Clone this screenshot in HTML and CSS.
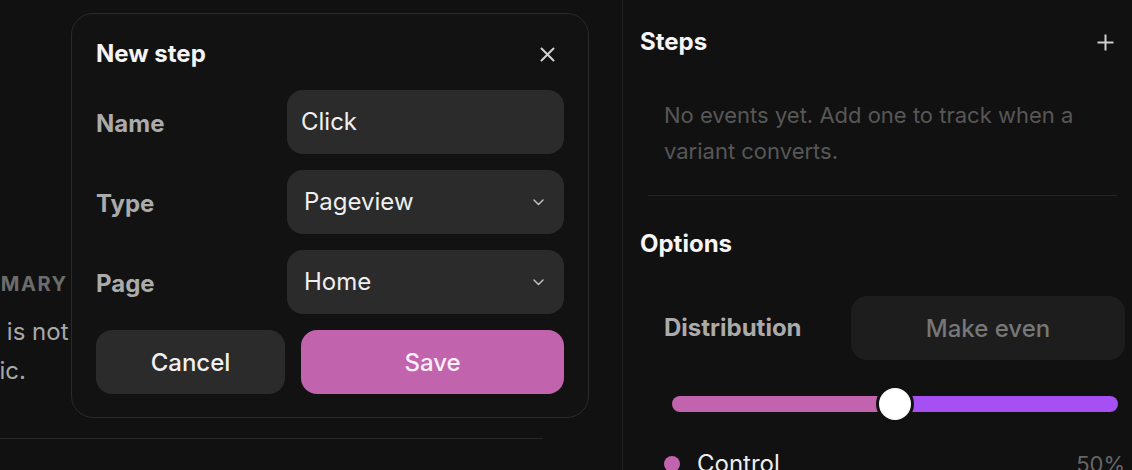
FILE: index.html
```html
<!DOCTYPE html>
<html lang="en">
<head>
<meta charset="utf-8">
<title>New step</title>
<link rel="stylesheet" href="styles.css">
</head>
<body>
<div class="app">
  <section class="left-pane">
    <div class="left-inner">
      <div class="summary-label">Summary</div>
      <p class="summary-text">Post is not public.</p>
      <div class="left-rule"></div>
    </div>

    <div class="dialog" role="dialog" aria-label="New step">
      <div class="dialog-header">
        <h2 class="dialog-title">New step</h2>
        <button class="icon-btn close-btn" aria-label="Close">
          <svg width="15" height="15" viewBox="0 0 15 15"><path d="M1.5 1.5 L13.5 13.5 M13.5 1.5 L1.5 13.5" stroke="#d2d2d2" stroke-width="2" stroke-linecap="round" fill="none"/></svg>
        </button>
      </div>
      <div class="form">
        <div class="form-row">
          <label class="form-label">Name</label>
          <div class="field input-field">Click</div>
        </div>
        <div class="form-row">
          <label class="form-label">Type</label>
          <div class="field select-field"><span>Pageview</span>
            <svg class="chev" width="11" height="7" viewBox="0 0 11 7"><path d="M1 1 L5.5 5.5 L10 1" stroke="#bdbdbd" stroke-width="1.5" fill="none" stroke-linecap="round" stroke-linejoin="round"/></svg>
          </div>
        </div>
        <div class="form-row">
          <label class="form-label">Page</label>
          <div class="field select-field"><span>Home</span>
            <svg class="chev" width="11" height="7" viewBox="0 0 11 7"><path d="M1 1 L5.5 5.5 L10 1" stroke="#bdbdbd" stroke-width="1.5" fill="none" stroke-linecap="round" stroke-linejoin="round"/></svg>
          </div>
        </div>
        <div class="actions">
          <button class="btn btn-cancel">Cancel</button>
          <button class="btn btn-save">Save</button>
        </div>
      </div>
    </div>
  </section>

  <aside class="right-pane">
    <div class="panel-header">
      <h3 class="panel-title">Steps</h3>
      <button class="icon-btn add-btn" aria-label="Add step">
        <svg width="17" height="17" viewBox="0 0 17 17"><path d="M8.5 0.5 V16.5 M0.5 8.5 H16.5" stroke="#cfcfcf" stroke-width="2" fill="none"/></svg>
      </button>
    </div>
    <p class="empty-text">No events yet. Add one to track when a variant converts.</p>
    <div class="panel-rule"></div>
    <h3 class="panel-title options-title">Options</h3>
    <div class="dist-row">
      <span class="dist-label">Distribution</span>
      <button class="btn btn-even">Make even</button>
    </div>
    <div class="slider">
      <div class="track"></div>
      <div class="thumb"></div>
    </div>
    <div class="legend-row">
      <span class="dot"></span>
      <span class="legend-name">Control</span>
      <span class="legend-pct">50%</span>
    </div>
  </aside>
</div>
</body>
</html>
```
FILE: styles.css
```css
* { box-sizing: border-box; }
html, body {
  margin: 0;
  padding: 0;
  background: #111111;
  height: 100%;
  overflow: hidden;
}
body {
  font-family: "Inter", "Noto Sans", sans-serif;
  font-size: 24px;
  line-height: 36px;
  color: #eeeeee;
}
button {
  font-family: inherit;
  border: none;
  background: none;
  padding: 0;
  margin: 0;
  color: inherit;
  cursor: pointer;
}
h2, h3, p { margin: 0; }

.app {
  display: flex;
  width: 1132px;
  height: 470px;
}

/* ---------- left pane ---------- */
.left-pane {
  position: relative;
  width: 623px;
  flex: none;
  border-right: 1px solid #232323;
  overflow: hidden;
}
.left-inner {
  margin-left: -50px;
  padding-top: 270px;
}
.summary-label {
  font-size: 20px;
  line-height: 28px;
  font-weight: 700;
  letter-spacing: 1.5px;
  text-transform: uppercase;
  color: #6c6c6c;
}
.summary-text {
  width: 126px;
  margin-top: 14px;
  font-size: 24px;
  line-height: 39px;
  color: #a9a9a9;
}
.left-rule {
  margin-top: 48px;
  width: 593px;
  height: 1px;
  background: #272727;
}

/* ---------- dialog ---------- */
.dialog {
  position: absolute;
  left: 71px;
  top: 13px;
  width: 518px;
  padding: 24px 24px 23px;
  background: #121212;
  border: 1px solid #2a2a2a;
  border-radius: 22px;
}
.dialog-header {
  display: flex;
  align-items: center;
  justify-content: space-between;
  height: 32px;
  margin-bottom: 20px;
}
.dialog-title {
  font-size: 24px;
  line-height: 32px;
  font-weight: 700;
  color: #f4f4f4;
}
.icon-btn {
  display: flex;
  align-items: center;
  justify-content: center;
}
.close-btn { margin-right: 9px; }

.form {
  display: flex;
  flex-direction: column;
  gap: 16px;
}
.form-row {
  display: flex;
  align-items: center;
  justify-content: space-between;
  height: 64px;
}
.form-label {
  padding-top: 4px;
  font-weight: 700;
  color: #ababab;
}
.field {
  width: 277px;
  height: 64px;
  border-radius: 16px;
  background: #2b2b2b;
  display: flex;
  align-items: center;
  color: #efefef;
}
.input-field { padding-left: 14px; }
.select-field {
  padding: 0 20px 0 17px;
  justify-content: space-between;
}
.chev { flex: none; }

.actions {
  display: flex;
  gap: 16px;
}
.btn {
  height: 64px;
  border-radius: 16px;
  font-size: 24px;
  font-weight: 450;
  display: flex;
  align-items: center;
  justify-content: center;
}
.btn-cancel {
  width: 189px;
  background: #2b2b2b;
  color: #f0f0f0;
}
.btn-save {
  flex: 1;
  background: #c264ad;
  color: #fbeff8;
}

/* ---------- right pane ---------- */
.right-pane {
  flex: 1;
  padding: 24px 7px 0 17px;
}
.panel-header {
  display: flex;
  align-items: center;
  justify-content: space-between;
  height: 36px;
  padding-right: 11px;
}
.panel-title {
  font-size: 24px;
  line-height: 36px;
  font-weight: 700;
  color: #f6f6f6;
}
.empty-text {
  margin-top: 37px;
  padding: 0 15px 0 24px;
  font-size: 22px;
  color: #575757;
  line-height: 36px;
}
.panel-rule {
  margin: 26px 8px 0 8px;
  height: 1px;
  background: #262626;
}
.options-title {
  margin-top: 30px;
}
.dist-row {
  margin-top: 34px;
  padding-left: 24px;
  display: flex;
  align-items: center;
  justify-content: space-between;
  height: 64px;
}
.dist-label {
  font-weight: 700;
  color: #ababab;
}
.btn-even {
  width: 274px;
  background: #1d1d1d;
  color: #777777;
}
.slider {
  position: relative;
  margin: 26px 7px 0 32px;
  height: 36px;
  display: flex;
  align-items: center;
}
.track {
  width: 100%;
  height: 16px;
  border-radius: 8px;
  background: linear-gradient(to right, #c264ad 0 50%, #a64ff2 50% 100%);
}
.thumb {
  position: absolute;
  left: 50%;
  top: 50%;
  width: 38px;
  height: 38px;
  margin: -19px 0 0 -19px;
  border-radius: 50%;
  background: #ffffff;
  border: 3px solid #111111;
}
.legend-row {
  margin-top: 24px;
  padding-left: 24px;
  display: flex;
  align-items: center;
  height: 36px;
}
.dot {
  width: 16px;
  height: 16px;
  border-radius: 50%;
  background: #c264ad;
  flex: none;
}
.legend-name {
  margin-left: 17px;
  color: #eeeeee;
}
.legend-pct {
  margin-left: auto;
  font-size: 22px;
  color: #666666;
}
```
